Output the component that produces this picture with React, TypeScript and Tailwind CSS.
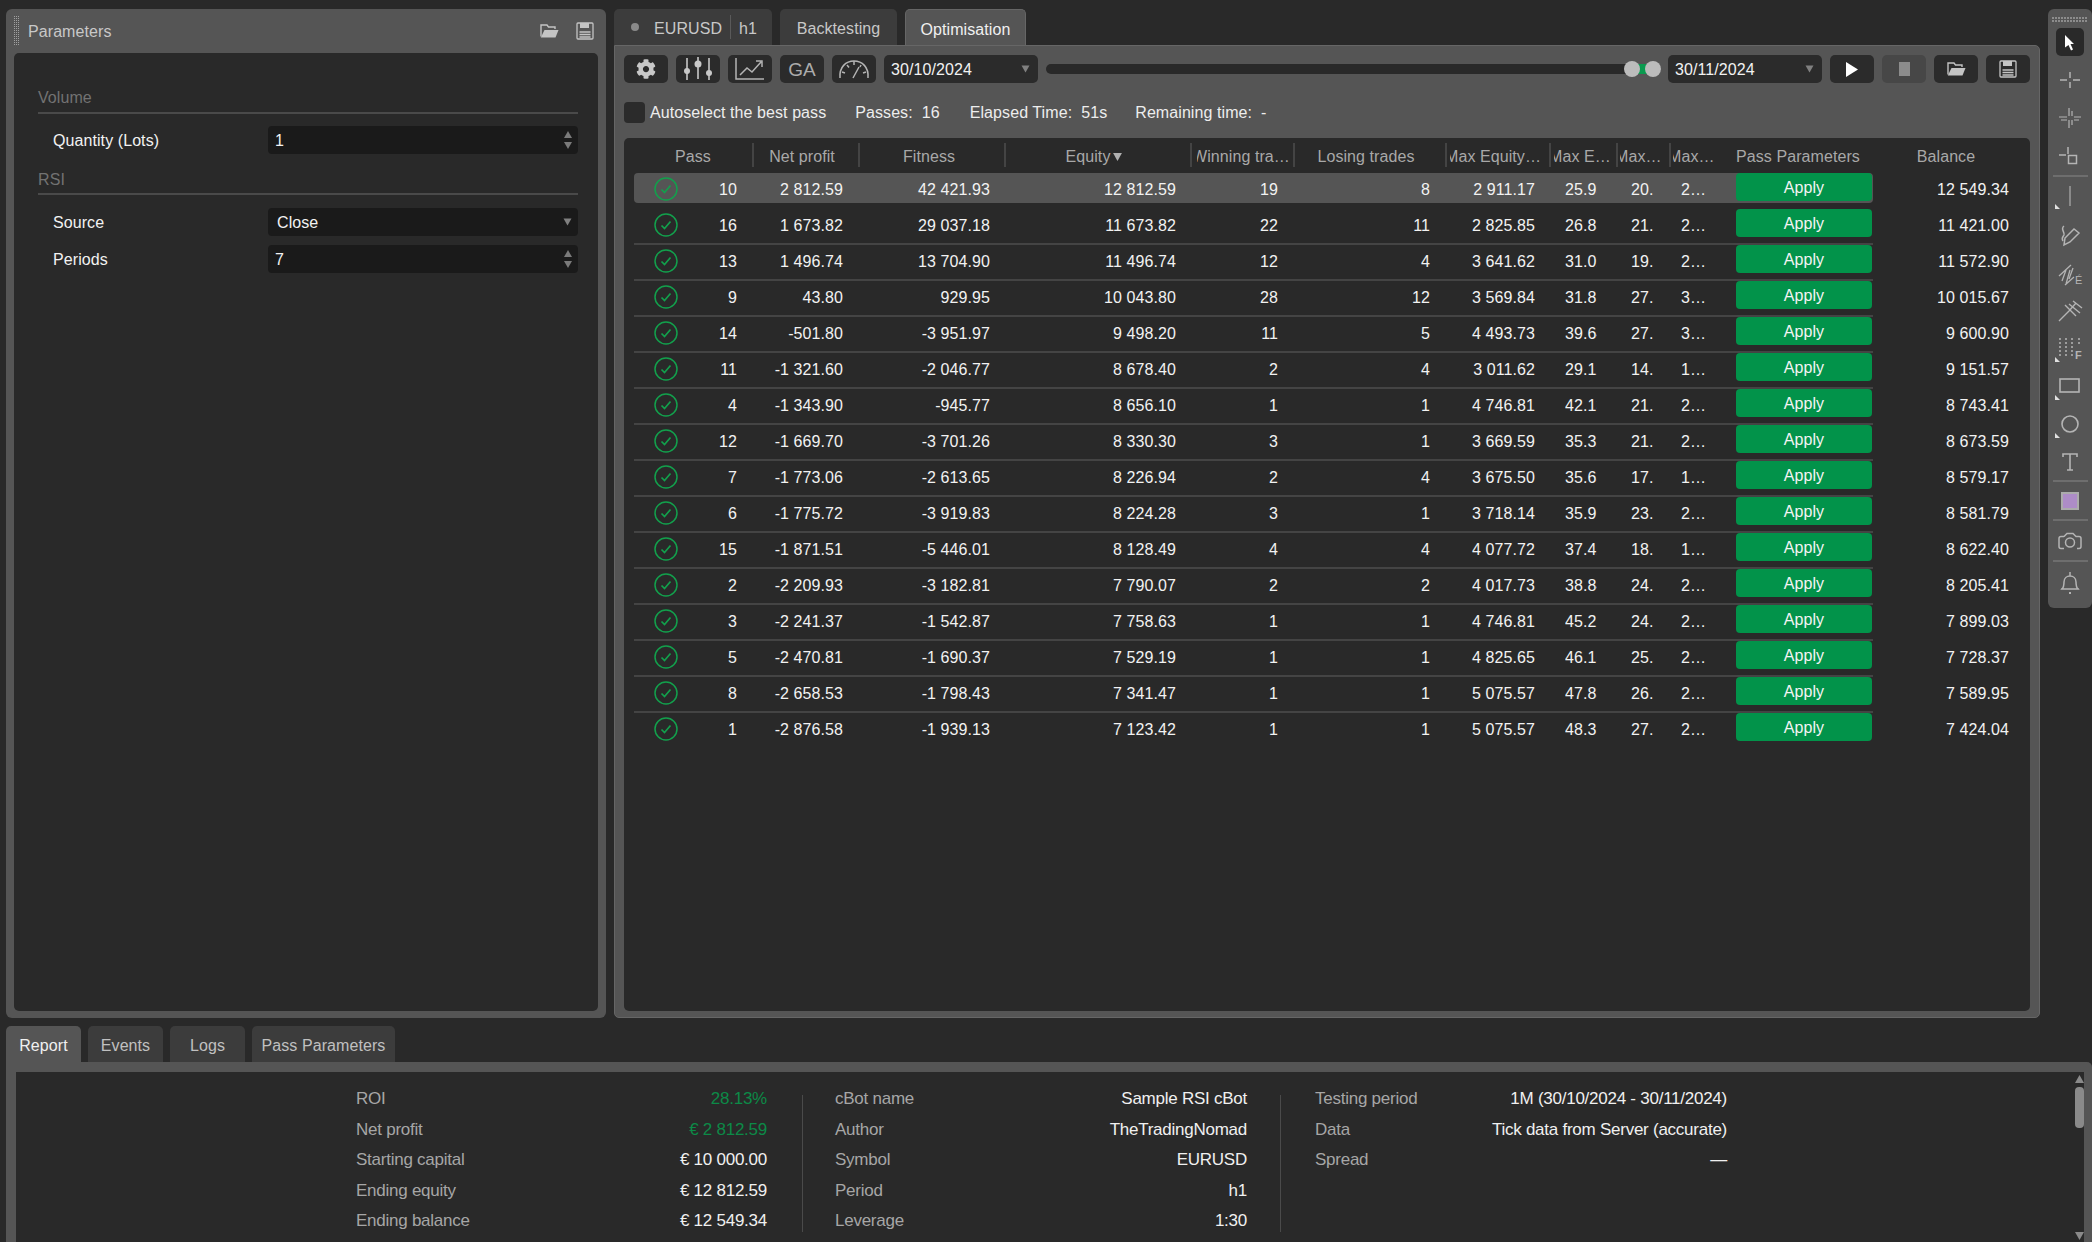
import { FaCog } from "react-icons/fa";

type Pass = [string, string, string, string, string, string, string, string, string, string, string];

const PASSES: Pass[] = [
  ["10", "2 812.59", "42 421.93", "12 812.59", "19", "8", "2 911.17", "25.93", "20.51", "2.31", "12 549.34"],
  ["16", "1 673.82", "29 037.18", "11 673.82", "22", "11", "2 825.85", "26.83", "21.42", "2.12", "11 421.00"],
  ["13", "1 496.74", "13 704.90", "11 496.74", "12", "4", "3 641.62", "31.02", "19.63", "2.75", "11 572.90"],
  ["9", "43.80", "929.95", "10 043.80", "28", "12", "3 569.84", "31.81", "27.14", "3.10", "10 015.67"],
  ["14", "-501.80", "-3 951.97", "9 498.20", "11", "5", "4 493.73", "39.64", "27.33", "3.42", "9 600.90"],
  ["11", "-1 321.60", "-2 046.77", "8 678.40", "2", "4", "3 011.62", "29.12", "14.25", "1.64", "9 151.57"],
  ["4", "-1 343.90", "-945.77", "8 656.10", "1", "1", "4 746.81", "42.13", "21.40", "2.50", "8 743.41"],
  ["12", "-1 669.70", "-3 701.26", "8 330.30", "3", "1", "3 669.59", "35.32", "21.18", "2.33", "8 673.59"],
  ["7", "-1 773.06", "-2 613.65", "8 226.94", "2", "4", "3 675.50", "35.63", "17.36", "1.92", "8 579.17"],
  ["6", "-1 775.72", "-3 919.83", "8 224.28", "3", "1", "3 718.14", "35.91", "23.07", "2.61", "8 581.79"],
  ["15", "-1 871.51", "-5 446.01", "8 128.49", "4", "4", "4 077.72", "37.42", "18.22", "1.83", "8 622.40"],
  ["2", "-2 209.93", "-3 182.81", "7 790.07", "2", "2", "4 017.73", "38.84", "24.16", "2.71", "8 205.41"],
  ["3", "-2 241.37", "-1 542.87", "7 758.63", "1", "1", "4 746.81", "45.21", "24.30", "2.45", "7 899.03"],
  ["5", "-2 470.81", "-1 690.37", "7 529.19", "1", "1", "4 825.65", "46.15", "25.11", "2.88", "7 728.37"],
  ["8", "-2 658.53", "-1 798.43", "7 341.47", "1", "1", "5 075.57", "47.83", "26.42", "2.93", "7 589.95"],
  ["1", "-2 876.58", "-1 939.13", "7 123.42", "1", "1", "5 075.57", "48.31", "27.05", "2.97", "7 424.04"],
];

const COLS = "grid grid-cols-[120px_106px_146px_186px_103px_152px_104px_67px_53px_65px_137px]";
const HEAD = "h-[24px] pt-[4px] flex items-center border-r-2 border-[#444444] overflow-hidden";
const CELL = "h-[30px] pt-[4px] flex items-center";
const ICON = "#b4b4b4";

function FolderIcon() {
  return (
    <svg width="19" height="14" viewBox="0 0 19 14" fill="none">
      <path d="M1 12.500V1h6l1.500 2H15v2" stroke="#c4c4c4" strokeWidth="1.400" />
      <path d="M4.500 6H18.500L15.500 13.500H0.800z" fill="#c4c4c4" />
    </svg>
  );
}

function SaveIcon() {
  return (
    <svg width="18" height="18" viewBox="0 0 18 18" fill="none">
      <rect x="1" y="1" width="16" height="16" rx="1" stroke="#c4c4c4" strokeWidth="1.3" />
      <rect x="4" y="1" width="9" height="5" fill="#c4c4c4" />
      <path d="M3.500 10h11M3.500 12.500h11M3.500 15h11" stroke="#c4c4c4" strokeWidth="1.3" />
    </svg>
  );
}

function Spinner() {
  return (
    <svg width="10" height="20" viewBox="0 0 10 20" fill="#7a7a7a">
      <path d="M5 1l4 7H1z" />
      <path d="M5 19l4-7H1z" />
    </svg>
  );
}

function Caret() {
  return (
    <svg width="9" height="8" viewBox="0 0 9 8" fill="#808080">
      <path d="M0.500 0.500h8L4.500 7.500z" />
    </svg>
  );
}

function CheckCircle() {
  return (
    <svg width="24" height="24" viewBox="0 0 24 24" fill="none" stroke="#12a04c" strokeWidth="1.500">
      <circle cx="12" cy="12" r="11" />
      <path d="M7.500 12.500l3 3 6-7" strokeWidth="1.700" />
    </svg>
  );
}

function Corner() {
  return <path d="M1 22l5 5H1z" fill="#e0e0e0" stroke="none" />;
}

function Tool({ children, h = "h-[38px]" }: { children?: React.ReactNode; h?: string }) {
  return (
    <div className={`${h} shrink-0 flex items-center justify-center`}>
      <svg width="32" height="28" viewBox="0 0 32 28" fill="none" stroke={ICON} strokeWidth="1.500">
        {children}
      </svg>
    </div>
  );
}

function ToolSep() {
  return <div className="h-[2px] w-[35px] shrink-0 bg-[#6e6e6e] self-center" />;
}

function RightToolbar() {
  return (
    <div className="w-[44px] h-[599px] rounded-[6px] bg-[#555555] flex flex-col">
      <div className="h-[19px] pt-[8px] px-[4px]">
        <svg width="36" height="6" fill="#8c8c8c">
          <defs>
            <pattern id="grip" width="3" height="3" patternUnits="userSpaceOnUse">
              <rect width="2" height="2" />
            </pattern>
          </defs>
          <rect width="36" height="6" fill="url(#grip)" />
        </svg>
      </div>
      <div className="h-[33px] shrink-0 flex justify-center">
        <div className="w-[28px] h-[28px] rounded-[5px] bg-[#292929] flex items-center justify-center">
          <svg width="14" height="17" viewBox="0 0 14 17" fill="#ffffff">
            <path d="M2 1l9 9H7.500l2.500 5.500-2 1L5.500 11 2 13.500z" />
          </svg>
        </div>
      </div>
      <Tool>
        <path d="M16 6v6M16 16v6M6 14h7M19 14h7" />
      </Tool>
      <Tool>
        <path d="M15 4v8M15 16v8M18 7v5M18 16v5M5 13h8M20 13h7M7 16h6M20 16h5" strokeWidth="1.200" />
      </Tool>
      <Tool>
        <path d="M14 5v7M5 13h7" />
        <rect x="14.500" y="13.500" width="8" height="8" />
      </Tool>
      <ToolSep />
      <Tool>
        <path d="M16 4v20" strokeWidth="2" stroke="#8a8a8a" />
        <Corner />
      </Tool>
      <Tool h="h-[40px]">
        <path d="M10 5c-4 3 1 6 0 9-1 2-3 3-1 6M10 24l1-7 9-9 5 4-9 9z" />
      </Tool>
      <Tool h="h-[37px]">
        <path d="M5 16L17 5M8 21l4-11M12 24l4-14M15 19l4-11M11 25l9-8" strokeWidth="1.300" />
        <text x="21" y="24" fontSize="11" fill={ICON} stroke="none" fontFamily="Liberation Sans">É</text>
      </Tool>
      <Tool>
        <path d="M5 24L15 14M15 14l7-8M11 8l11 11M15 7l11 9M19 4l9 7" strokeWidth="1.400" />
      </Tool>
      <Tool>
        <path d="M6 3v20M12 3v20M18 3v20M25 3v6" strokeDasharray="2 2" strokeWidth="1.500" />
        <Corner />
        <text x="21" y="24" fontSize="11" fontWeight="700" fill={ICON} stroke="none" fontFamily="Liberation Sans">F</text>
      </Tool>
      <Tool>
        <rect x="6" y="6" width="19" height="13" strokeWidth="1.600" />
        <Corner />
      </Tool>
      <Tool>
        <circle cx="16" cy="13" r="8" strokeWidth="1.600" />
        <Corner />
      </Tool>
      <Tool h="h-[36px]">
        <path d="M9 9V6h14v3M16 6v16M13 22h6" strokeWidth="1.600" />
      </Tool>
      <ToolSep />
      <div className="h-[37px] shrink-0 flex items-center justify-center">
        <div className="w-[18px] h-[18px] border-2 border-[#ababab] bg-[#ad8cc7]" />
      </div>
      <ToolSep />
      <Tool h="h-[39px]">
        <g transform="translate(0 1.500)">
          <path d="M10 8l3-3h6l3 3h3c1 0 2 1 2 2v8c0 1-1 2-2 2h-2M10 20H7c-1 0-2-1-2-2v-8c0-1 1-2 2-2h3" />
          <circle cx="16" cy="14" r="4.500" />
        </g>
      </Tool>
      <ToolSep />
      <Tool h="h-[42px]">
        <path d="M8 20c2-2 2-4 2-7 0-4 3-6 6-6s6 2 6 6c0 3 0 5 2 7zM16 3v4M7 20h18" />
        <path d="M15 24h2" strokeWidth="2" />
      </Tool>
    </div>
  );
}

function SectionLabel({ text, box }: { text: string; box: string }) {
  return (
    <div className={`${box} flex items-start pt-[3px] border-b-2 border-[#4a4a4a] text-[#727272]`}>{text}</div>
  );
}

function ParamRow({ label, value, kind, box }: { label: string; value: string; kind: "spin" | "select"; box: string }) {
  return (
    <div className={`${box} flex items-center`}>
      <div className="w-[230px] pl-[15px] pt-[2px] text-[#f2f2f2]">{label}</div>
      <div className={`flex-1 h-full rounded-[4px] bg-[#1a1a1a] flex items-center justify-between text-[#f2f2f2] ${kind === "spin" ? "pl-[7px] pr-[5px]" : "pl-[9px] pr-[6px]"}`}>
        <span className="pt-[2px]">{value}</span>
        {kind === "spin" ? <Spinner /> : <Caret />}
      </div>
    </div>
  );
}

function ParametersPanel() {
  return (
    <div className="w-[600px] h-full rounded-[6px] bg-[#555555] flex flex-col pb-[7px] px-[8px]">
      <div className="h-[44px] shrink-0 flex items-center">
        <svg width="6" height="30" className="shrink-0" fill="#a0a0a0">
          <defs>
            <pattern id="grip2" width="2" height="2" patternUnits="userSpaceOnUse">
              <rect width="1" height="1" />
            </pattern>
          </defs>
          <rect width="6" height="30" fill="url(#grip2)" />
        </svg>
        <span className="ml-[8px] pt-[2px] text-[#c8c8c8]">Parameters</span>
        <div className="ml-auto flex items-center gap-[17px] pr-[4px]">
          <FolderIcon />
          <SaveIcon />
        </div>
      </div>
      <div className="flex-1 rounded-[5px] bg-[#292929] pt-[32px] pl-[24px] pr-[20px]">
        <SectionLabel text="Volume" box="h-[29px]" />
        <ParamRow label="Quantity (Lots)" value="1" kind="spin" box="h-[28px] mt-[12px]" />
        <SectionLabel text="RSI" box="h-[28px] mt-[13px]" />
        <ParamRow label="Source" value="Close" kind="select" box="h-[28px] mt-[13px]" />
        <ParamRow label="Periods" value="7" kind="spin" box="h-[28px] mt-[9px]" />
      </div>
    </div>
  );
}

function ToolButton({ children, w = "w-[44px]", bg = "bg-[#2b2b2b]" }: { children: React.ReactNode; w?: string; bg?: string }) {
  return <div className={`${w} ${bg} h-[28px] shrink-0 rounded-[5px] flex items-center justify-center`}>{children}</div>;
}

function DateBox({ value }: { value: string }) {
  return (
    <div className="w-[154px] h-[28px] shrink-0 rounded-[5px] bg-[#2b2b2b] flex items-center justify-between pl-[7px] pr-[8px] text-[#f2f2f2]">
      <span className="pt-[2px]">{value}</span>
      <Caret />
    </div>
  );
}

function OptToolbar() {
  return (
    <div className="h-[28px] flex items-center gap-[8px]">
      <ToolButton>
        <FaCog size={20} color="#c8c8c8" />
      </ToolButton>
      <ToolButton>
        <svg width="28" height="24" viewBox="0 0 28 24" fill="#c8c8c8" stroke="#c8c8c8" strokeWidth="1.600">
          <path d="M3 1v22M14 0v22M25 1v22" />
          <circle cx="3" cy="14" r="3" stroke="none" />
          <circle cx="14" cy="7" r="3.500" stroke="none" />
          <circle cx="25" cy="16" r="3" stroke="none" />
        </svg>
      </ToolButton>
      <ToolButton>
        <svg width="30" height="24" viewBox="0 0 30 24" fill="none" stroke="#b4b4b4" strokeWidth="1.500">
          <path d="M1 1v21h28" />
          <path d="M5 18l7-7 5 4 9-10M21 4h6v6" />
        </svg>
      </ToolButton>
      <ToolButton>
        <span className="text-[19px] pt-[1px] text-[#acacac]">GA</span>
      </ToolButton>
      <ToolButton>
        <svg width="32" height="22" viewBox="0 0 32 22" fill="none" stroke="#b4b4b4" strokeWidth="1.500">
          <path d="M2 20C1 9 8 3 16 3s15 6 14 17" />
          <path d="M15 20l6-11M4 14l3 1M9 7l2 2.500M16 3v4M23 7l-1 2M28 14l-3 1" />
        </svg>
      </ToolButton>
      <DateBox value="30/10/2024" />
      <div className="relative flex-1 h-[10px] rounded-full bg-[#292929] mr-[-1px]">
        <div className="absolute right-[8px] top-0 w-[20px] h-[10px] bg-[#0a9a4f]" />
        <div className="absolute right-[21px] top-[-3px] w-[16px] h-[16px] rounded-full bg-[#bcbcbc]" />
        <div className="absolute right-0 top-[-3px] w-[16px] h-[16px] rounded-full bg-[#bcbcbc]" />
      </div>
      <DateBox value="30/11/2024" />
      <ToolButton>
        <svg width="12" height="15" viewBox="0 0 12 15" fill="#ffffff">
          <path d="M0 0l12 7.500L0 15z" />
        </svg>
      </ToolButton>
      <ToolButton bg="bg-[#474747]">
        <div className="w-[11px] h-[14px] bg-[#8c8c8c]" />
      </ToolButton>
      <ToolButton>
        <FolderIcon />
      </ToolButton>
      <ToolButton>
        <SaveIcon />
      </ToolButton>
    </div>
  );
}

function ClippedHead({ text, pad, w }: { text: string; pad: string; w: string }) {
  return (
    <div className={`${HEAD} ${pad}`}>
      <div className="overflow-hidden flex-1">
        <div className={`ml-[-5px] truncate ${w}`}>{text}</div>
      </div>
    </div>
  );
}

function PassTable() {
  return (
    <div className="flex-1 mt-[15px] rounded-[5px] bg-[#292929] pl-[10px] pt-[5px]">
      <div className="flex h-[30px] text-[#a8a8a8]">
        <div className={`w-[1239px] items-start ${COLS}`}>
          <div className={`${HEAD} justify-center`}>Pass</div>
          <div className={`${HEAD} justify-center pr-[8px]`}>Net profit</div>
          <div className={`${HEAD} justify-center pr-[6px]`}>Fitness</div>
          <div className={`${HEAD} justify-center pr-[8px]`}>
            <span>Equity</span>
            <svg width="9" height="8" viewBox="0 0 10 9" className="ml-[3px]" fill="#b0b0b0">
              <path d="M0 0h10L5 9z" />
            </svg>
          </div>
          <ClippedHead text="Winning trades" pad="pl-[5px]" w="w-[99px]" />
          <div className={`${HEAD} justify-center pr-[8px]`}>Losing trades</div>
          <ClippedHead text="Max Equity Drawdown" pad="pl-[3px]" w="w-[96px]" />
          <ClippedHead text="Max Equity %" pad="pl-[3px]" w="w-[62px]" />
          <ClippedHead text="Max Balance" pad="pl-[2px]" w="w-[47px]" />
          <div className="h-[24px] pt-[4px] pl-[2px] flex items-center overflow-hidden">
            <div className="overflow-hidden flex-1">
              <div className="ml-[-5px] truncate w-[47px]">Max Balance %</div>
            </div>
          </div>
          <div className="h-[24px] pt-[4px] flex items-center whitespace-nowrap">Pass Parameters</div>
        </div>
        <div className="w-[146px] h-[24px] pt-[4px] flex items-center justify-center">Balance</div>
      </div>
      {PASSES.map((p, i) => (
        <div key={p[0]} className="flex h-[36px] text-[#f2f2f2]">
          <div className="w-[1239px] flex flex-col">
            <div className={`${COLS} h-[30px] rounded-[4px] ${i === 0 ? "bg-[#555555]" : ""}`}>
              <div className="h-[30px] pt-[2px] flex items-center justify-between pl-[20px] pr-[17px]">
                <CheckCircle />
                <span className="pt-[2px]">{p[0]}</span>
              </div>
              <div className={`${CELL} justify-end pr-[17px]`}>{p[1]}</div>
              <div className={`${CELL} justify-end pr-[16px]`}>{p[2]}</div>
              <div className={`${CELL} justify-end pr-[16px]`}>{p[3]}</div>
              <div className={`${CELL} justify-end pr-[17px]`}>{p[4]}</div>
              <div className={`${CELL} justify-end pr-[17px]`}>{p[5]}</div>
              <div className={`${CELL} justify-end pr-[16px]`}>{p[6]}</div>
              <div className={`${CELL} pl-[14px]`}>
                <span className="w-[32px] overflow-hidden whitespace-nowrap">{p[7]}</span>
              </div>
              <div className={`${CELL} pl-[13px]`}>
                <span className="w-[22px] overflow-hidden whitespace-nowrap">{p[8]}</span>
              </div>
              <div className={`${CELL} pl-[10px]`}>
                <span className="w-[26px] truncate">{p[9]}</span>
              </div>
              <div className="h-[28px] pt-[2px] rounded-[4px] bg-[#02934a] flex items-center justify-center text-[#f4f4f4] mr-[1px]">
                Apply
              </div>
            </div>
            {i > 0 && i < PASSES.length - 1 && <div className="mt-auto h-[2px] bg-[#444444]" />}
          </div>
          <div className={`${CELL} justify-end w-[146px] pr-[10px]`}>{p[10]}</div>
        </div>
      ))}
    </div>
  );
}

function OptimisationPanel() {
  return (
    <div className="w-[1426px] h-full flex flex-col">
      <div className="h-[36px] shrink-0 flex items-end gap-[8px] text-[#c8c8c8]">
        <div className="w-[158px] h-[36px] rounded-t-[5px] bg-[#3c3c3c] flex items-center">
          <div className="ml-[17px] w-[8px] h-[8px] rounded-full bg-[#8a8a8a]" />
          <span className="ml-[15px] pt-[3px]">EURUSD</span>
          <div className="ml-[8px] w-px h-[24px] bg-[#5a5a5a]" />
          <span className="ml-[8px] pt-[3px]">h1</span>
        </div>
        <div className="w-[117px] h-[36px] pt-[3px] rounded-t-[5px] bg-[#3c3c3c] flex items-center justify-center">Backtesting</div>
        <div className="w-[121px] h-[36px] pt-[4px] rounded-t-[5px] bg-[#555555] border-t border-x border-[#666666] flex items-center justify-center text-[#f0f0f0]">
          Optimisation
        </div>
      </div>
      <div className="flex-1 rounded-b-[5px] rounded-tr-[5px] border border-[#666666] bg-[#555555] flex flex-col px-[9px] pt-[9px] pb-[6px]">
        <OptToolbar />
        <div className="h-[21px] mt-[19px] flex items-center text-[#ededed]">
          <div className="w-[21px] h-[21px] rounded-[4px] bg-[#2b2b2b]" />
          <span className="ml-[5px] whitespace-nowrap">Autoselect the best pass</span>
          <span className="ml-[29px] whitespace-pre">Passes:  16</span>
          <span className="ml-[30px] whitespace-pre">Elapsed Time:  51s</span>
          <span className="ml-[28px] whitespace-pre">Remaining time:  -</span>
        </div>
        <PassTable />
      </div>
    </div>
  );
}

function ReportRow({ label, value, tone = "text-[#f0f0f0]" }: { label: string; value: string; tone?: string }) {
  return (
    <div className="h-[30.5px] pt-[2px] flex items-center justify-between whitespace-nowrap text-[17px] tracking-[-0.25px]">
      <span className="text-[#a6a6a6]">{label}</span>
      <span className={tone}>{value}</span>
    </div>
  );
}

function ReportPanel() {
  return (
    <div className="h-[216px] flex flex-col">
      <div className="h-[36px] shrink-0 flex items-end gap-[7px] text-[#c0c0c0]">
        <div className="w-[75px] h-[36px] pt-[3px] rounded-t-[5px] bg-[#555555] flex items-center justify-center text-[#f0f0f0]">Report</div>
        <div className="w-[75px] h-[36px] pt-[3px] rounded-t-[5px] bg-[#3c3c3c] flex items-center justify-center">Events</div>
        <div className="w-[75px] h-[36px] pt-[3px] rounded-t-[5px] bg-[#3c3c3c] flex items-center justify-center">Logs</div>
        <div className="w-[143px] h-[36px] pt-[3px] rounded-t-[5px] bg-[#3c3c3c] flex items-center justify-center">Pass Parameters</div>
      </div>
      <div className="flex-1 rounded-tr-[5px] bg-[#555555] pt-[10px] pl-[10px] pr-[8px] flex flex-col overflow-hidden">
        <div className="flex-1 bg-[#292929] flex overflow-hidden">
          <div className="flex-1 flex pl-[340px] pt-[11px]">
            <div className="w-[411px]">
              <ReportRow label="ROI" value="28.13%" tone="text-[#0c8a47]" />
              <ReportRow label="Net profit" value="€ 2 812.59" tone="text-[#0c8a47]" />
              <ReportRow label="Starting capital" value="€ 10 000.00" />
              <ReportRow label="Ending equity" value="€ 12 812.59" />
              <ReportRow label="Ending balance" value="€ 12 549.34" />
            </div>
            <div className="ml-[35px] mt-[12px] w-px h-[137px] bg-[#4a4a4a]" />
            <div className="ml-[32px] w-[412px]">
              <ReportRow label="cBot name" value="Sample RSI cBot" />
              <ReportRow label="Author" value="TheTradingNomad" />
              <ReportRow label="Symbol" value="EURUSD" />
              <ReportRow label="Period" value="h1" />
              <ReportRow label="Leverage" value="1:30" />
            </div>
            <div className="ml-[33px] mt-[12px] w-px h-[137px] bg-[#4a4a4a]" />
            <div className="ml-[34px] w-[412px]">
              <ReportRow label="Testing period" value="1M (30/10/2024 - 30/11/2024)" />
              <ReportRow label="Data" value="Tick data from Server (accurate)" />
              <ReportRow label="Spread" value="—" />
            </div>
          </div>
          <div className="w-[9px] shrink-0 flex flex-col items-center pt-[3px] pb-[2px]">
            <svg width="9" height="8" fill="#8a8a8a">
              <path d="M4.500 0L9 8H0z" />
            </svg>
            <div className="mt-[4px] w-[9px] h-[41px] rounded-[4px] bg-[#8a8a8a]" />
            <svg width="9" height="8" fill="#8a8a8a" className="mt-auto">
              <path d="M0 0h9L4.500 8z" />
            </svg>
          </div>
        </div>
      </div>
    </div>
  );
}

export default function App() {
  return (
    <div className="w-[2092px] h-[1242px] overflow-hidden bg-[#292929] pl-[6px] pt-[9px] text-[16px] leading-[20px] tracking-[0.08px] font-['Liberation_Sans',Arial,sans-serif]">
      <div className="h-[1009px] flex gap-[8px]">
        <ParametersPanel />
        <OptimisationPanel />
        <RightToolbar />
      </div>
      <div className="mt-[8px]">
        <ReportPanel />
      </div>
    </div>
  );
}
